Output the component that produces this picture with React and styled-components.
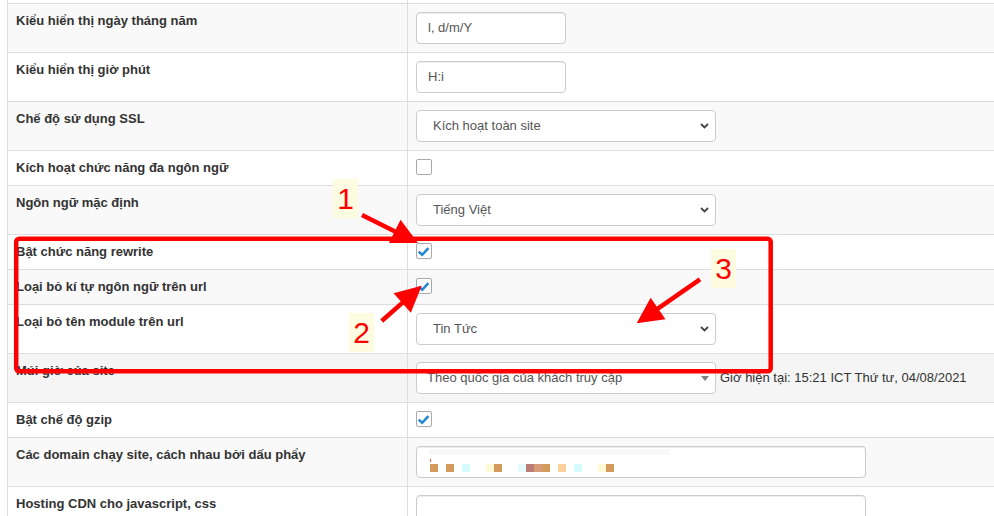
import styled, { createGlobalStyle } from "styled-components";

const GlobalStyle = createGlobalStyle`
  html, body {
    margin: 0;
    padding: 0;
    background: #fff;
  }
  body {
    font-family: "Liberation Sans", Arial, sans-serif;
    font-size: 13px;
    color: #333;
    overflow: hidden;
  }
  * {
    box-sizing: border-box;
  }
`;

const Page = styled.div`
  position: relative;
  width: 994px;
  height: 516px;
  overflow: hidden;
`;

const Table = styled.div`
  margin-left: 7px;
  width: 1020px;
  border-left: 1px solid #ddd;
`;

const tones = {
  plain: "#fff",
  striped: "#f9f9f9",
  hover: "#f5f5f5",
};

const Row = styled.div`
  display: grid;
  grid-template-columns: 400px 1fr;
  border-top: 1px solid #ddd;
  background: ${(p) => tones[p.$tone || "plain"]};
`;

const StubRow = styled(Row)`
  border-top: none;
  height: 3px;
`;

const Label = styled.div`
  padding: 8px;
  border-right: 1px solid #ddd;
  font-weight: 700;
  line-height: 18px;
  color: #333;
`;

const Value = styled.div`
  padding: 8px;
  display: flex;
  align-items: flex-start;
  gap: 4px;
  line-height: 18px;
`;

const TextBox = styled.div`
  width: ${(p) => p.$w}px;
  height: 32px;
  padding: 0 11px;
  border: 1px solid #ccc;
  border-radius: 4px;
  background: #fff;
  box-shadow: inset 0 1px 1px rgba(0, 0, 0, 0.075);
  display: flex;
  align-items: center;
  color: #555;
  font-size: 13px;
`;

const Redacted = styled(TextBox)`
  flex-direction: column;
  align-items: flex-start;
  padding: 2px 12px 0;
`;

const FaintBar = styled.span`
  width: 241px;
  height: 6px;
  background: #f8f8f8;
`;

const Tick = styled.span`
  width: 1px;
  height: 3px;
  margin: 4px 0 2px 1px;
  background: #e0603a;
`;

const Pixels = styled.div`
  display: grid;
  grid-template-columns: repeat(23, 8px);
  margin-left: 1px;
`;

const Pixel = styled.span`
  height: 8px;
  background: ${(p) => p.$c || "transparent"};
`;

const SelectBox = styled.div`
  width: 300px;
  height: 32px;
  padding: 0 6px 0 ${(p) => (p.$caret ? 10 : 16)}px;
  border: 1px solid #ccc;
  border-radius: 4px;
  background: #fff;
  display: flex;
  align-items: center;
  justify-content: space-between;
  color: #555;
  font-size: 13px;
  flex-shrink: 0;
`;

const Check = styled.span`
  width: 16px;
  height: 16px;
  border: 1px solid #a9a9a9;
  border-radius: 2px;
  background: #fff;
  display: flex;
  align-items: center;
  justify-content: center;
`;

const TimeNote = styled.span`
  align-self: center;
  color: #333;
  font-size: 13px;
  white-space: nowrap;
`;

const Overlay = styled.svg`
  position: absolute;
  left: 0;
  top: 0;
  pointer-events: none;
`;

const Badge = styled.span`
  position: absolute;
  left: ${(p) => p.$x}px;
  top: ${(p) => p.$y}px;
  width: 25px;
  height: 39px;
  background: #fdfce0;
  color: #ff0000;
  font-family: "Liberation Sans", Arial, sans-serif;
  font-size: 30px;
  line-height: 39px;
  text-align: center;
`;

function Chevron() {
  return (
    <svg width="9" height="6" viewBox="0 0 9 6">
      <path d="M1 1 L4.5 4.5 L8 1" fill="none" stroke="#444" strokeWidth="1.8" />
    </svg>
  );
}

function Caret() {
  return (
    <svg width="8" height="5" viewBox="0 0 8 5">
      <path d="M0 0 H8 L4 5 Z" fill="#808080" />
    </svg>
  );
}

function Checkbox({ checked }) {
  return (
    <Check>
      {checked && (
        <svg width="14" height="14" viewBox="0 0 14 14">
          <path
            d="M1.6 7.6 L5.2 10.8 L11.4 4.2"
            fill="none"
            stroke="#2386d2"
            strokeWidth="2.6"
          />
        </svg>
      )}
    </Check>
  );
}

function Select({ text, caret }) {
  return (
    <SelectBox $caret={caret}>
      <span>{text}</span>
      {caret ? <Caret /> : <Chevron />}
    </SelectBox>
  );
}

const pixelColors = [
  "#d49c5c", null, "#d49c5c", null, "#d5fbfd", null, null, "#fffad6",
  "#d49c5c", null, null, "#e5fafa", "#b97d78", "#d69b78", "#d49c5c", null,
  "#fdd19e", null, "#d5fbfd", null, null, "#fffad6", "#d49c5c",
];

function Arrow({ x1, y1, tx, ty }) {
  const dx = tx - x1;
  const dy = ty - y1;
  const len = Math.hypot(dx, dy);
  const ux = dx / len;
  const uy = dy / len;
  const bx = tx - ux * 26;
  const by = ty - uy * 26;
  const px = -uy * 13;
  const py = ux * 13;
  return (
    <g>
      <line x1={x1} y1={y1} x2={bx + ux * 2} y2={by + uy * 2} stroke="#ff0000" strokeWidth="4.5" />
      <polygon
        points={`${tx},${ty} ${bx + px},${by + py} ${bx - px},${by - py}`}
        fill="#ff0000"
      />
    </g>
  );
}

export default function App() {
  return (
    <>
      <GlobalStyle />
      <Page>
        <Table>
          <StubRow>
            <Label />
            <Value />
          </StubRow>
          <Row $tone="striped">
            <Label>Kiểu hiển thị ngày tháng năm</Label>
            <Value>
              <TextBox $w={150}>l, d/m/Y</TextBox>
            </Value>
          </Row>
          <Row>
            <Label>Kiểu hiển thị giờ phút</Label>
            <Value>
              <TextBox $w={150}>H:i</TextBox>
            </Value>
          </Row>
          <Row $tone="striped">
            <Label>Chế độ sử dụng SSL</Label>
            <Value>
              <Select text="Kích hoạt toàn site" />
            </Value>
          </Row>
          <Row>
            <Label>Kích hoạt chức năng đa ngôn ngữ</Label>
            <Value>
              <Checkbox />
            </Value>
          </Row>
          <Row $tone="striped">
            <Label>Ngôn ngữ mặc định</Label>
            <Value>
              <Select text="Tiếng Việt" />
            </Value>
          </Row>
          <Row>
            <Label>Bật chức năng rewrite</Label>
            <Value>
              <Checkbox checked />
            </Value>
          </Row>
          <Row $tone="striped">
            <Label>Loại bỏ kí tự ngôn ngữ trên url</Label>
            <Value>
              <Checkbox checked />
            </Value>
          </Row>
          <Row>
            <Label>Loại bỏ tên module trên url</Label>
            <Value>
              <Select text="Tin Tức" />
            </Value>
          </Row>
          <Row $tone="hover">
            <Label>Múi giờ của site</Label>
            <Value>
              <Select text="Theo quốc gia của khách truy cập" caret />
              <TimeNote>Giờ hiện tại: 15:21 ICT Thứ tư, 04/08/2021</TimeNote>
            </Value>
          </Row>
          <Row>
            <Label>Bật chế độ gzip</Label>
            <Value>
              <Checkbox checked />
            </Value>
          </Row>
          <Row $tone="striped">
            <Label>Các domain chạy site, cách nhau bởi dấu phẩy</Label>
            <Value>
              <Redacted $w={450}>
                <FaintBar />
                <Tick />
                <Pixels>
                  {pixelColors.map((c, i) => (
                    <Pixel key={i} $c={c} />
                  ))}
                </Pixels>
              </Redacted>
            </Value>
          </Row>
          <Row>
            <Label>Hosting CDN cho javascript, css</Label>
            <Value>
              <TextBox $w={450} />
            </Value>
          </Row>
        </Table>

        <Overlay width="994" height="516" viewBox="0 0 994 516">
          <rect
            x="16.2"
            y="238.8"
            width="754.5"
            height="132.5"
            rx="3"
            fill="none"
            stroke="#ff0000"
            strokeWidth="4.5"
          />
          <Arrow x1={362} y1={215} tx={418} ty={243} />
          <Arrow x1={381.7} y1={321} tx={421.7} ty={285.7} />
          <Arrow x1={700} y1={279.3} tx={636.7} ty={323.3} />
        </Overlay>
        <Badge $x={333} $y={179}>1</Badge>
        <Badge $x={349} $y={313}>2</Badge>
        <Badge $x={711} $y={249}>3</Badge>
      </Page>
    </>
  );
}
